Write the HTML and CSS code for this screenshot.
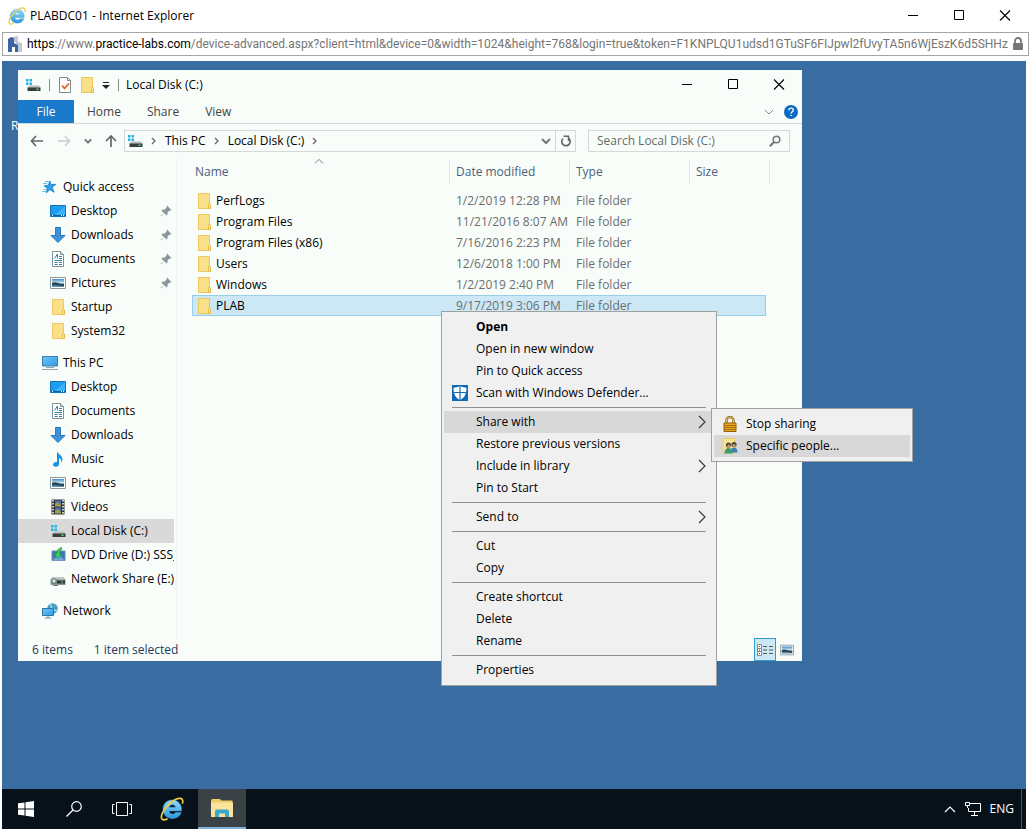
FILE: index.html
```html
<!DOCTYPE html>
<html lang="en">
<head>
    <meta charset="UTF-8">
    <meta name="viewport" content="width=device-width, initial-scale=1.0">
    <title>PLABDC01 - Internet Explorer</title>
    <link rel="stylesheet" href="styles.css">
</head>
<body>
    <!-- Icon sprite -->
    <svg class="sprite" aria-hidden="true">
        <defs>
            <linearGradient id="blueScreen" x1="0" y1="0" x2="1" y2="1">
                <stop offset="0" stop-color="#6cc5f5"/><stop offset="1" stop-color="#2f9be6"/>
            </linearGradient>
            <linearGradient id="ieBlue" x1="0" y1="0" x2="0" y2="1">
                <stop offset="0" stop-color="#8fdcf8"/><stop offset="1" stop-color="#2b97dc"/>
            </linearGradient>
            <linearGradient id="photo" x1="0" y1="0" x2="0" y2="1">
                <stop offset="0" stop-color="#3f88c0"/><stop offset="0.5" stop-color="#d4ecf4"/><stop offset="0.65" stop-color="#35546a"/><stop offset="1" stop-color="#5fa0b8"/>
            </linearGradient>
        </defs>
        <symbol id="i-ie" viewBox="0 0 24 24">
            <path d="M12.200 3c-5.200 0-9.200 3.900-9.200 9.200 0 5.400 4 9.300 9.500 9.300 4.200 0 7.300-2.200 8.700-6h-5.700c-.6 1-1.600 1.600-2.900 1.600-2 0-3.300-1.100-3.400-3.100h12.300c.7-6.300-3.300-11-9.300-11zM9.300 10.300c.3-1.600 1.400-2.600 3.100-2.600s2.900 1 3.100 2.600z" fill="url(#ieBlue)" stroke="#3aa0dc" stroke-width=".5"/>
            <path d="M22.300 6.600c1-2.700.4-4.800-1.700-5.200-3-.6-8.400 2.300-13 7.200C3 13.500.4 19.100 1.700 21.700c.9 1.700 3.200 1.400 5.900 0" fill="none" stroke="#f0cb4a" stroke-width="1.700"/>
        </symbol>
        <symbol id="i-labs" viewBox="0 0 16 16">
            <path d="M6 1l5-1v6l4 1v9H9V6H6z" fill="#c3c9d3"/>
            <path d="M1 3l3-2 3 1v5l4 2v7H8v-5H5v5H1z" fill="#3f64a6"/>
        </symbol>
        <symbol id="i-lock" viewBox="0 0 12 14">
            <path d="M3 6V4a3 3 0 016 0v2" fill="none" stroke="#777" stroke-width="1.800"/>
            <rect x="1" y="6" width="10" height="7" rx="1" fill="#777"/>
        </symbol>
        <symbol id="i-min" viewBox="0 0 12 12"><path d="M1 5.500h10" stroke="#000"/></symbol>
        <symbol id="i-max" viewBox="0 0 12 12"><path d="M1.500 .5h9v9h-9z" fill="none" stroke="#000"/></symbol>
        <symbol id="i-close" viewBox="0 0 12 12"><path d="M1 .5l10 10M11 .5L1 10.500" stroke="#000" stroke-width="1.100"/></symbol>
        <symbol id="i-disk" viewBox="0 0 16 16">
            <path d="M1 2h2.500v2.500H1zM4.500 2H7v2.500H4.500zM1 5.500h2.500V8H1zM4.500 5.500H7V8H4.500z" fill="#27b3e8"/>
            <path d="M4 8.500h10l1.500 2.500H2.500z" fill="#b9bdbd"/>
            <path d="M2.500 10.500h13V14h-13z" fill="#3a3d3f"/>
            <path d="M11.500 11.500h2v1.500h-2z" fill="#5bdc6a"/>
        </symbol>
        <symbol id="i-check" viewBox="0 0 14 16">
            <path d="M1.500 .5h8l3 3v12h-11z" fill="#fff" stroke="#888"/>
            <path d="M9.500 .5v3h3" fill="none" stroke="#888"/>
            <path d="M4 8.500l2.500 3 4.500-5" fill="none" stroke="#e2612c" stroke-width="1.800"/>
        </symbol>
        <symbol id="i-folder" viewBox="0 0 14 16">
            <path d="M1.500 .5h11v10h.5v5H1.500z" fill="#fbe08a" stroke="#ecc75c"/>
            <path d="M11.500 15.500v-4l1-1.500 1 1.500v4z" fill="#fbe9a5" stroke="#e3b94a"/>
        </symbol>
        <symbol id="i-caret" viewBox="0 0 8 8"><path d="M1 1h6v1H1zM0 4h8L4 8z" fill="#222"/></symbol>
        <symbol id="i-chevd" viewBox="0 0 10 10"><path d="M1 3l4 4 4-4" fill="none" stroke="currentColor"/></symbol>
        <symbol id="i-chevdb" viewBox="0 0 10 10"><path d="M1 3l4 4 4-4" fill="none" stroke="currentColor" stroke-width="2"/></symbol>
        <symbol id="i-chevr" viewBox="0 0 6 8"><path d="M1 1l3 3-3 3" fill="none" stroke="currentColor" stroke-width="1.300"/></symbol>
        <symbol id="i-chevu" viewBox="0 0 12 10"><path d="M1 8l5-5 5 5" fill="none" stroke="currentColor" stroke-width="1.200"/></symbol>
        <symbol id="i-help" viewBox="0 0 14 14">
            <circle cx="7" cy="7" r="7" fill="#0b69c0"/>
            <path d="M4.800 5.300C4.900 3.900 5.800 3.200 7.100 3.200s2.200.8 2.200 1.900c0 1.700-2.200 1.700-2.200 3.500" fill="none" stroke="#fff" stroke-width="1.300"/>
            <path d="M6.400 9.700h1.400v1.400H6.400z" fill="#fff"/>
        </symbol>
        <symbol id="i-back" viewBox="0 0 14 12"><path d="M6 1L1.500 6 6 11M1.500 6H13" fill="none" stroke="currentColor" stroke-width="1.700"/></symbol>
        <symbol id="i-fwd" viewBox="0 0 14 12"><path d="M8 1l4.500 5L8 11M12.500 6H1" fill="none" stroke="currentColor" stroke-width="1.400"/></symbol>
        <symbol id="i-up" viewBox="0 0 12 12"><path d="M1 6l5-5 5 5M6 1v11" fill="none" stroke="currentColor" stroke-width="1.700"/></symbol>
        <symbol id="i-refresh" viewBox="0 0 12 12">
            <path d="M8.700 3.300A4.200 4.200 0 113 3.500" fill="none" stroke="#666" stroke-width="1.700"/>
            <path d="M3.500 1.200H8.500V6" fill="none" stroke="#666" stroke-width="1.500"/>
        </symbol>
        <symbol id="i-find" viewBox="0 0 12 12">
            <circle cx="7.500" cy="4.500" r="3.300" fill="none" stroke="#777" stroke-width="1.600"/>
            <path d="M5 7L.8 11.200" stroke="#777" stroke-width="2"/>
        </symbol>
        <symbol id="i-star" viewBox="0 0 16 16">
            <path d="M8 2l1.100 3.600 4.700-.3-3.600 3 1.900 4.900-4.200-2.500-3.600 3.200.9-4.700L2 6.700l4.200-.4z" fill="#2f9fe8" stroke="#1c7ec9" stroke-width=".8"/>
            <path d="M3 2.500h4M1 4.500h4M.5 12.500h4M1.500 10.500h2.500" stroke="#62bdf0"/>
        </symbol>
        <symbol id="i-desktop" viewBox="0 0 16 16">
            <path d="M.5 2.500h15v11H.5z" fill="#1c9df2" stroke="#1272b8"/>
            <path d="M15 3L5 12h10z" fill="#3cb2fa"/>
            <path d="M1 12.500h14" stroke="#0b5e9e"/>
            <path d="M2 12.500h1M11 12.500h1M13 12.500h1" stroke="#fff"/>
        </symbol>
        <symbol id="i-down" viewBox="0 0 16 16"><path d="M5.500 .5h5v8h4.500L8 15.500 1 8.500h4.500z" fill="#3e92dc" stroke="#2b78be"/></symbol>
        <symbol id="i-doc" viewBox="0 0 16 16">
            <path d="M2.500 .5h8l3 3v12h-11z" fill="#fff" stroke="#858f93"/>
            <path d="M10.500 .5v3h3" fill="#d8dde0" stroke="#858f93"/>
            <path d="M4.500 7.500L7.500 3v4.500M9 5.500h3M9 7.500h3M4.500 9.500H12M4.500 11.500h3M9 11.500h3M4.500 13.500h3M9 13.500h3" fill="none" stroke="#3384ad"/>
        </symbol>
        <symbol id="i-pic" viewBox="0 0 16 16">
            <path d="M.5 2.500h15v11H.5z" fill="#fff" stroke="#8b979d"/>
            <path d="M2 4h12v8H2z" fill="url(#photo)"/>
            <path d="M2 8c4-2 6 1 12 1.500V11C9 11 6 9 2 10z" fill="#2b4355"/>
        </symbol>
        <symbol id="i-pc" viewBox="0 0 16 16">
            <path d="M.5 1.500h15v9.500H.5z" fill="url(#blueScreen)" stroke="#3a7fb0"/>
            <path d="M4 12.500h8" stroke="#8fa3ae"/><path d="M0 14.500h16" stroke="#98a5ac"/>
        </symbol>
        <symbol id="i-music" viewBox="0 0 16 16">
            <path d="M7 0c1 3.500 5.500 4.200 5.500 8 0 1.500-.7 2.500-1.500 3.500.5-3-.5-4-2-4.500V13c0 1.800-1.500 3-3.400 2.800C4 15.600 2.800 14.700 3 13.200c.3-1.600 2.100-2.700 4-2.200z" fill="#1594e0"/>
        </symbol>
        <symbol id="i-video" viewBox="0 0 16 16">
            <path d="M1.500 .5h13v15h-13z" fill="#333"/>
            <path d="M3 1v14M13 1v14" stroke="#fff" stroke-width="1.500" stroke-dasharray="1.500 1.500"/>
            <path d="M5 1.500h6v6H5zM5 8.500h6v6H5z" fill="#456dbb"/>
            <path d="M5 5l3-2 3 3v1.500H5zM5 12l3-2 3 3v1.500H5z" fill="#a39a45"/>
        </symbol>
        <symbol id="i-dvd" viewBox="0 0 16 16">
            <path d="M2 4h13v9.500H2z" fill="#3f78b5" stroke="#6f8da8"/><path d="M2 13.500L9 8l6 5.500z" fill="#77a6d4"/>
            <path d="M11.500 .5C8 1.500 6.500 4 6.500 6.500H4L8 11.500l4-5H9.500c0-2.200 1-3.300 2.500-4.500z" fill="#38cf5d" stroke="#168c3e" stroke-width=".6"/>
        </symbol>
        <symbol id="i-netdisk" viewBox="0 0 16 16">
            <path d="M2 6h12l1.500 3H.5z" fill="#c3c8c6"/><path d="M.5 8.500h15V14H.5z" fill="#8f9794"/>
            <path d="M2 8h4v4H2z" fill="#dbeae2" stroke="#577a74"/><path d="M7 9.500h8v3H7z" fill="#2e3532"/>
            <path d="M11 10.500h2v1h-2z" fill="#5be073"/><path d="M3 14.500h5" stroke="#5d806f"/>
        </symbol>
        <symbol id="i-network" viewBox="0 0 16 16">
            <circle cx="10.500" cy="5.500" r="5.300" fill="#4c9cc6"/><path d="M8 1c2 2 0 4 3 5s2 3 4 1" fill="none" stroke="#a7dced" stroke-width="1.500"/>
            <path d="M.5 5.500h11v7H.5z" fill="url(#blueScreen)" stroke="#2b75a8"/><path d="M3 15h6M6 13v2" stroke="#6790a8"/>
        </symbol>
        <symbol id="i-pin" viewBox="0 0 12 12"><path d="M7 .5L11.500 5l-1.300.6-.7-.2-2 2v2.100l-1 1-2.400-2.400L1 11.500 .5 11l3.400-3.100L1.500 5.500l1-1h2.200l2-2-.3-.8z" fill="#8a959b"/></symbol>
        <symbol id="i-details" viewBox="0 0 18 14">
            <path d="M1.500 1.500h4v11h-4zM1.500 5.500h4M1.500 8.500h4" fill="#fff" stroke="#8a8a8a"/>
            <path d="M3 3.500h1M3 7h1M3 10.500h1M7 3.500h4M13 3.500h4M7 7h4M13 7h4M7 10.500h4M13 10.500h4" stroke="#555"/>
        </symbol>
        <symbol id="i-defender" viewBox="0 0 16 16">
            <path d="M0 0h16v16H0z" fill="#0f6bb5"/>
            <path d="M8 1c2 1.300 4.300 1.700 6.500 1.700 0 6.300-1.700 9.800-6.500 12.300C3.200 12.500 1.500 9 1.500 2.700 3.700 2.700 6 2.300 8 1z" fill="#fff"/>
            <path d="M8 1v14M1 7.500h14" stroke="#0f6bb5" stroke-width="1.200"/>
        </symbol>
        <symbol id="i-padlock" viewBox="0 0 16 16">
            <path d="M4.500 7V4a3.500 3 0 017 0v3" fill="none" stroke="#8a6a24" stroke-width="2.400"/>
            <path d="M4.500 7V4a3.500 3 0 017 0v3" fill="none" stroke="#e3bb60"/>
            <path d="M2 7h12v8.500H2z" fill="#f0a91c" stroke="#8d5f0c"/>
            <path d="M2.500 9.500h11M2.500 11.500h11M2.500 13.500h11" stroke="#a06c10"/>
        </symbol>
        <symbol id="i-people" viewBox="0 0 16 16">
            <path d="M1 .5h11.500v14.500H1z" fill="#fbe792" stroke="#e5cb6b"/>
            <circle cx="6.500" cy="7" r="2.600" fill="#4b4a3a"/><circle cx="12" cy="6.500" r="2.600" fill="#4b4a3a"/>
            <circle cx="6.800" cy="8" r="1.600" fill="#c79b71"/><circle cx="12" cy="7.600" r="1.600" fill="#c79b71"/>
            <path d="M8.500 14.500c0-4 1.500-5 3.500-5s3.500 1.500 3.500 5z" fill="#3d7fb5"/><path d="M2.500 15.500c0-4 2-5.500 4-5.500s4 1.500 4 5.500z" fill="#3f9a75"/>
        </symbol>
        <symbol id="i-more" viewBox="0 0 8 14"><path d="M1 1l6 6-6 6" fill="none" stroke="#333" stroke-width="1.100"/></symbol>
        <symbol id="i-start" viewBox="0 0 16 16"><path d="M0 2.300l6.500-.9v6.100H0zM7.500 1.200L16 0v7.500H7.500zM0 8.500h6.500v6.100L0 13.700zM7.500 8.500H16V16l-8.500-1.200z" fill="#fff"/></symbol>
        <symbol id="i-search" viewBox="0 0 16 16"><circle cx="10.500" cy="5.500" r="4.800" fill="none" stroke="#fff" stroke-width="1.200"/><path d="M7 9L.5 15.500" stroke="#fff" stroke-width="1.300"/></symbol>
        <symbol id="i-task" viewBox="0 0 20 14"><path d="M4.500 .5h11v13h-11zM2.500 2.500h-2v9h2M17.500 2.500h2v9h-2" fill="none" stroke="#fff"/></symbol>
        <symbol id="i-files" viewBox="0 0 22 18">
            <path d="M0 1.500L1 0h8l1 1.500h11.500V18H0z" fill="#f0cd6a"/><path d="M0 3.500h22V18H0z" fill="#fbe39c"/>
            <path d="M4 18v-5.500c0-1.200.8-2 2-2h10c1.200 0 2 .8 2 2V18h-4v-3.500H8V18z" fill="#3aa7c9"/>
        </symbol>
        <symbol id="i-tray" viewBox="0 0 16 14">
            <path d="M5 1.500h10.500v8H3.500V6M9.500 10v3M6 13.500h7" fill="none" stroke="#fff"/>
            <path d="M.5 .5h4v3h-4zM2.500 3.500V6" fill="none" stroke="#fff"/>
        </symbol>
    </svg>

    <header class="title-bar">
        <svg class="ic-18"><use href="#i-ie"/></svg>
        <h1>PLABDC01 - Internet Explorer</h1>
        <div class="window-buttons">
            <button aria-label="Minimize"><svg class="ic-12"><use href="#i-min"/></svg></button>
            <button aria-label="Maximize"><svg class="ic-12"><use href="#i-max"/></svg></button>
            <button aria-label="Close"><svg class="ic-12"><use href="#i-close"/></svg></button>
        </div>
    </header>

    <div class="url-bar">
        <svg class="ic-16"><use href="#i-labs"/></svg>
        <div class="url"><b>https</b>://www.<b>practice-labs.com</b>/device-advanced.aspx?client=html&amp;device=0&amp;width=1024&amp;height=768&amp;login=true&amp;token=F1KNPLQU1udsd1GTuSF6FIJpwl2fUvyTA5n6WjEszK6d5SHHz</div>
        <svg class="ic-lock"><use href="#i-lock"/></svg>
    </div>

    <main class="desktop">
        <span class="desktop-label">R</span>

        <section class="explorer">
            <div class="explorer-title">
                <svg class="ic-16"><use href="#i-disk"/></svg>
                <span class="bar"></span>
                <svg class="ic-doc"><use href="#i-check"/></svg>
                <svg class="ic-doc"><use href="#i-folder"/></svg>
                <svg class="ic-8"><use href="#i-caret"/></svg>
                <span class="bar"></span>
                <h2>Local Disk (C:)</h2>
                <div class="window-buttons">
                    <button aria-label="Minimize"><svg class="ic-12"><use href="#i-min"/></svg></button>
                    <button aria-label="Maximize"><svg class="ic-12"><use href="#i-max"/></svg></button>
                    <button aria-label="Close"><svg class="ic-12"><use href="#i-close"/></svg></button>
                </div>
            </div>

            <div class="ribbon">
                <button class="tab file">File</button>
                <button class="tab">Home</button>
                <button class="tab">Share</button>
                <button class="tab">View</button>
                <div class="ribbon-right">
                    <button aria-label="Expand ribbon"><svg class="ic-10"><use href="#i-chevd"/></svg></button>
                    <button aria-label="Help"><svg class="ic-14"><use href="#i-help"/></svg></button>
                </div>
            </div>

            <div class="nav-row">
                <div class="nav-buttons">
                    <button aria-label="Back"><svg class="ic-arrow"><use href="#i-back"/></svg></button>
                    <button class="off" aria-label="Forward"><svg class="ic-arrow"><use href="#i-fwd"/></svg></button>
                    <button aria-label="Recent"><svg class="ic-8"><use href="#i-chevdb"/></svg></button>
                    <button aria-label="Up"><svg class="ic-12"><use href="#i-up"/></svg></button>
                </div>
                <div class="breadcrumb">
                    <svg class="ic-16"><use href="#i-disk"/></svg>
                    <svg class="ic-chev"><use href="#i-chevr"/></svg>
                    <button>This PC</button>
                    <svg class="ic-chev"><use href="#i-chevr"/></svg>
                    <button>Local Disk (C:)</button>
                    <svg class="ic-chev"><use href="#i-chevr"/></svg>
                    <div class="breadcrumb-end">
                        <button aria-label="Previous locations"><svg class="ic-10"><use href="#i-chevdb"/></svg></button>
                        <button class="refresh" aria-label="Refresh"><svg class="ic-12"><use href="#i-refresh"/></svg></button>
                    </div>
                </div>
                <label class="search">
                    <input type="text" placeholder="Search Local Disk (C:)" aria-label="Search Local Disk (C:)">
                    <svg class="ic-12"><use href="#i-find"/></svg>
                </label>
            </div>

            <div class="explorer-body">
                <nav class="sidebar">
                    <a href="#" class="root"><svg class="ic-16"><use href="#i-star"/></svg><span>Quick access</span></a>
                    <a href="#"><svg class="ic-16"><use href="#i-desktop"/></svg><span>Desktop</span><svg class="ic-12"><use href="#i-pin"/></svg></a>
                    <a href="#"><svg class="ic-16"><use href="#i-down"/></svg><span>Downloads</span><svg class="ic-12"><use href="#i-pin"/></svg></a>
                    <a href="#"><svg class="ic-16"><use href="#i-doc"/></svg><span>Documents</span><svg class="ic-12"><use href="#i-pin"/></svg></a>
                    <a href="#"><svg class="ic-16"><use href="#i-pic"/></svg><span>Pictures</span><svg class="ic-12"><use href="#i-pin"/></svg></a>
                    <a href="#"><svg class="ic-16"><use href="#i-folder"/></svg><span>Startup</span></a>
                    <a href="#"><svg class="ic-16"><use href="#i-folder"/></svg><span>System32</span></a>

                    <a href="#" class="root"><svg class="ic-16"><use href="#i-pc"/></svg><span>This PC</span></a>
                    <a href="#"><svg class="ic-16"><use href="#i-desktop"/></svg><span>Desktop</span></a>
                    <a href="#"><svg class="ic-16"><use href="#i-doc"/></svg><span>Documents</span></a>
                    <a href="#"><svg class="ic-16"><use href="#i-down"/></svg><span>Downloads</span></a>
                    <a href="#"><svg class="ic-16"><use href="#i-music"/></svg><span>Music</span></a>
                    <a href="#"><svg class="ic-16"><use href="#i-pic"/></svg><span>Pictures</span></a>
                    <a href="#"><svg class="ic-16"><use href="#i-video"/></svg><span>Videos</span></a>
                    <a href="#" class="active"><svg class="ic-16"><use href="#i-disk"/></svg><span>Local Disk (C:)</span></a>
                    <a href="#"><svg class="ic-16"><use href="#i-dvd"/></svg><span>DVD Drive (D:) SSS_X</span></a>
                    <a href="#"><svg class="ic-16"><use href="#i-netdisk"/></svg><span>Network Share (E:)</span></a>

                    <a href="#" class="root"><svg class="ic-16"><use href="#i-network"/></svg><span>Network</span></a>
                </nav>

                <div class="files">
                    <svg class="sort"><use href="#i-chevu"/></svg>
                    <table>
                        <colgroup><col class="c-name"><col class="c-mid"><col class="c-mid"><col class="c-size"></colgroup>
                        <thead>
                            <tr><th>Name</th><th>Date modified</th><th>Type</th><th>Size</th></tr>
                        </thead>
                        <tbody>
                            <tr><td><svg class="ic-doc"><use href="#i-folder"/></svg>PerfLogs</td><td>1/2/2019 12:28 PM</td><td>File folder</td><td></td></tr>
                            <tr><td><svg class="ic-doc"><use href="#i-folder"/></svg>Program Files</td><td>11/21/2016 8:07 AM</td><td>File folder</td><td></td></tr>
                            <tr><td><svg class="ic-doc"><use href="#i-folder"/></svg>Program Files (x86)</td><td>7/16/2016 2:23 PM</td><td>File folder</td><td></td></tr>
                            <tr><td><svg class="ic-doc"><use href="#i-folder"/></svg>Users</td><td>12/6/2018 1:00 PM</td><td>File folder</td><td></td></tr>
                            <tr><td><svg class="ic-doc"><use href="#i-folder"/></svg>Windows</td><td>1/2/2019 2:40 PM</td><td>File folder</td><td></td></tr>
                            <tr class="selected"><td><svg class="ic-doc"><use href="#i-folder"/></svg>PLAB</td><td>9/17/2019 3:06 PM</td><td>File folder</td><td></td></tr>
                        </tbody>
                    </table>
                </div>
            </div>

            <footer class="status">
                <span>6 items</span>
                <span>1 item selected</span>
                <div class="view-buttons">
                    <button class="on" aria-label="Details"><svg class="ic-details"><use href="#i-details"/></svg></button>
                    <button aria-label="Large icons"><svg class="ic-14"><use href="#i-pic"/></svg></button>
                </div>
            </footer>
        </section>

        <div class="menu context-menu">
            <button><b>Open</b></button>
            <button>Open in new window</button>
            <button>Pin to Quick access</button>
            <button><svg class="ic-16"><use href="#i-defender"/></svg>Scan with Windows Defender...</button>
            <hr>
            <div class="has-sub">
                <button class="hover">Share with<svg class="more"><use href="#i-more"/></svg></button>
                <div class="menu submenu">
                    <button><svg class="ic-16"><use href="#i-padlock"/></svg>Stop sharing</button>
                    <button class="hover"><svg class="ic-16"><use href="#i-people"/></svg>Specific people...</button>
                </div>
            </div>
            <button>Restore previous versions</button>
            <button>Include in library<svg class="more"><use href="#i-more"/></svg></button>
            <button>Pin to Start</button>
            <hr>
            <button>Send to<svg class="more"><use href="#i-more"/></svg></button>
            <hr>
            <button>Cut</button>
            <button>Copy</button>
            <hr>
            <button>Create shortcut</button>
            <button>Delete</button>
            <button>Rename</button>
            <hr>
            <button>Properties</button>
        </div>

        <div class="taskbar">
            <button aria-label="Start"><svg class="ic-16"><use href="#i-start"/></svg></button>
            <button aria-label="Search"><svg class="ic-16"><use href="#i-search"/></svg></button>
            <button aria-label="Task view"><svg class="ic-task"><use href="#i-task"/></svg></button>
            <button class="app" aria-label="Internet Explorer"><svg class="ic-24"><use href="#i-ie"/></svg></button>
            <button class="app running" aria-label="File Explorer"><svg class="ic-files"><use href="#i-files"/></svg></button>
            <div class="tray">
                <button aria-label="Show hidden icons"><svg class="ic-12"><use href="#i-chevu"/></svg></button>
                <button aria-label="Network"><svg class="ic-16"><use href="#i-tray"/></svg></button>
                <button>ENG</button>
            </div>
        </div>
    </main>
</body>
</html>
```
FILE: styles.css
```css
* {
    margin: 0;
    padding: 0;
    box-sizing: border-box;
}

body {
    display: flex;
    flex-direction: column;
    min-height: 100vh;
    padding: 0 2px 4px;
    background: #ffffff;
    color: #000000;
    font-family: 'Open Sans', 'Noto Sans', sans-serif;
    font-size: 12px;
    line-height: 16px;
}

button {
    background: none;
    border: none;
    color: inherit;
    font: inherit;
    cursor: pointer;
}

svg {
    display: block;
    flex: none;
}

.sprite {
    position: absolute;
    width: 0;
    height: 0;
}

.ic-8 { width: 8px; height: 8px; }
.ic-10 { width: 10px; height: 10px; }
.ic-12 { width: 12px; height: 12px; }
.ic-14 { width: 14px; height: 14px; }
.ic-16 { width: 16px; height: 16px; }
.ic-18 { width: 18px; height: 18px; }
.ic-24 { width: 24px; height: 24px; }
.ic-doc { width: 14px; height: 16px; }
.ic-lock { width: 12px; height: 14px; }
.ic-arrow { width: 14px; height: 12px; }
.ic-chev { width: 6px; height: 8px; color: #666666; }
.ic-details { width: 18px; height: 14px; }
.ic-task { width: 20px; height: 14px; }
.ic-files { width: 22px; height: 18px; }

/* Browser frame */
.title-bar {
    display: flex;
    align-items: center;
    gap: 4px;
    height: 32px;
    padding-left: 6px;
}

.title-bar h1,
.explorer-title h2 {
    font-size: 12px;
    font-weight: normal;
}

.window-buttons {
    display: flex;
    margin-left: auto;
}

.window-buttons button {
    display: flex;
    align-items: center;
    justify-content: center;
    width: 46px;
    height: 30px;
}

.url-bar {
    display: flex;
    align-items: center;
    gap: 4px;
    height: 24px;
    margin-right: -1px;
    padding: 0 4px;
    border: 1px solid #a5a5a5;
}

.url {
    flex: 1;
    overflow: hidden;
    white-space: nowrap;
    color: #757575;
    font-family: Roboto, sans-serif;
}

.url b {
    font-weight: normal;
    color: #000000;
}

/* Remote desktop */
.desktop {
    position: relative;
    display: flex;
    flex: 1;
    flex-direction: column;
    justify-content: flex-end;
    margin: 5px 2px 0 0;
    background: #396da1;
}

.desktop-label {
    position: absolute;
    left: 9px;
    top: 57px;
    color: #ffffff;
}

.explorer {
    position: absolute;
    left: 16px;
    top: 9px;
    display: flex;
    flex-direction: column;
    width: 784px;
    background: #f8fdfa;
}

.explorer-title {
    display: flex;
    align-items: center;
    gap: 8px;
    height: 30px;
    padding-left: 7px;
}

.bar {
    width: 1px;
    height: 12px;
    background: #8c8c8c;
}

.explorer-title h2 {
    margin-left: -1px;
}

.ribbon {
    display: flex;
    height: 24px;
    border-bottom: 1px solid #d5dad8;
    color: #444444;
}

.tab {
    padding: 0 13px;
}

.tab.file {
    width: 56px;
    background: #1979ca;
    color: #ffffff;
}

.ribbon-right {
    display: flex;
    align-items: center;
    gap: 10px;
    margin-left: auto;
    padding-right: 4px;
    color: #888888;
}

.nav-row {
    display: flex;
    align-items: center;
    gap: 12px;
    height: 34px;
    padding: 0 12px;
}

.nav-buttons {
    display: flex;
    align-items: center;
    gap: 13px;
    color: #666666;
}

.nav-buttons button {
    display: flex;
}

.nav-buttons .off {
    color: #c8cccb;
}

.breadcrumb {
    display: flex;
    flex: 1;
    align-items: center;
    gap: 8px;
    height: 22px;
    margin-left: -5px;
    padding-left: 2px;
    border: 1px solid #d5dad8;
}

.breadcrumb-end {
    display: flex;
    align-items: center;
    gap: 4px;
    margin-left: auto;
    color: #777777;
}

.refresh {
    height: 20px;
    padding: 0 3px 0 4px;
    border-left: 1px solid #d5dad8;
}

.search {
    display: flex;
    align-items: center;
    width: 202px;
    height: 22px;
    padding: 0 8px;
    border: 1px solid #d5dad8;
}

.search input {
    flex: 1;
    min-width: 0;
    border: none;
    outline: none;
    background: none;
    font: inherit;
}

.search input::placeholder {
    color: #666c69;
}

.explorer-body {
    display: flex;
    height: 480px;
}

.sidebar {
    width: 159px;
    padding-top: 17px;
    border-right: 1px solid #eef2f0;
}

.sidebar a {
    display: flex;
    align-items: center;
    gap: 5px;
    height: 24px;
    margin-right: 2px;
    padding-left: 32px;
    overflow: hidden;
    color: #000000;
    text-decoration: none;
    white-space: nowrap;
}

.sidebar a.root {
    gap: 5px;
    margin-top: 8px;
    padding-left: 24px;
}

.sidebar a.root:first-child {
    margin-top: 0;
}

.sidebar a.active {
    background: #d9d9d9;
}

.sidebar .ic-12 {
    margin-left: auto;
    margin-right: 2px;
}

.files {
    position: relative;
    flex: 1;
    padding-left: 15px;
}

.sort {
    position: absolute;
    left: 137px;
    top: -1px;
    width: 10px;
    height: 8px;
    color: #777777;
}

table {
    width: 574px;
    table-layout: fixed;
    border-collapse: collapse;
}

.c-name { width: 258px; }
.c-mid { width: 120px; }
.c-size { width: 76px; }

th {
    position: relative;
    height: 32px;
    padding: 0 0 4px 6px;
    color: #4c607a;
    font-weight: normal;
    text-align: left;
}

th::after {
    content: '';
    position: absolute;
    top: 2px;
    right: 0;
    width: 1px;
    height: 24px;
    background: #e2e7e5;
}

th:last-child::after {
    right: -4px;
}

th:first-child {
    padding-left: 3px;
}

td {
    height: 21px;
    padding-left: 6px;
    color: #6d6d6d;
    white-space: nowrap;
}

td:first-child {
    padding-left: 5px;
    color: #000000;
}

td svg {
    display: inline-block;
    margin-right: 5px;
    vertical-align: top;
}

.selected {
    background: #cce8f6;
    outline: 1px solid #99cde8;
    outline-offset: -1px;
}

.status {
    display: flex;
    align-items: center;
    gap: 21px;
    height: 23px;
    padding-left: 14px;
    color: #1e395b;
}

.view-buttons {
    display: flex;
    margin-left: auto;
    padding-right: 4px;
}

.view-buttons button {
    display: flex;
    align-items: center;
    justify-content: center;
    width: 22px;
    height: 23px;
}

.view-buttons .on {
    border: 1px solid #3399cc;
    background: #cce8f6;
}

/* Menus */
.menu {
    position: absolute;
    padding: 4px 2px;
    border: 1px solid #a0a0a0;
    background: #f0f0f0;
}

.menu button {
    position: relative;
    display: block;
    width: 100%;
    height: 22px;
    padding-left: 32px;
    text-align: left;
    white-space: nowrap;
}

.menu .hover {
    background: #d8d8d8;
}

.menu .ic-16 {
    position: absolute;
    left: 8px;
    top: 3px;
}

.menu hr {
    height: 1px;
    margin: 3px 8px;
    border: none;
    background: #919191;
}

.more {
    position: absolute;
    right: 8px;
    top: 4px;
    width: 8px;
    height: 14px;
}

.context-menu {
    left: 439px;
    top: 250px;
    width: 276px;
}

.has-sub {
    position: relative;
}

.submenu {
    left: 267px;
    top: -3px;
    width: 202px;
}

/* Taskbar */
.taskbar {
    display: flex;
    height: 40px;
    background: #06111a;
    color: #ffffff;
}

.taskbar button {
    display: flex;
    align-items: center;
    justify-content: center;
    width: 48px;
}

.taskbar .app {
    margin-left: 2px;
}

.taskbar .running {
    margin-left: 2px;
    border-bottom: 2px solid #7fb4d8;
    background: #3a4246;
}

.tray {
    display: flex;
    gap: 9px;
    margin-left: auto;
    margin-right: 4px;
    padding-right: 7px;
    border-right: 1px solid #4b545b;
}

.tray button {
    width: auto;
}
```
